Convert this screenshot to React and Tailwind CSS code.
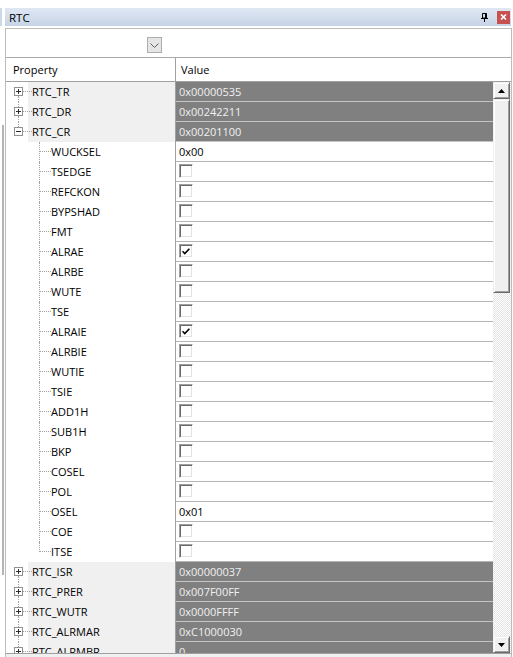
import React from "react";

const rows = [
  { name: "RTC_TR", value: "0x00000535", top: true },
  { name: "RTC_DR", value: "0x00242211", top: true },
  { name: "RTC_CR", value: "0x00201100", top: true, open: true },
  { name: "WUCKSEL", value: "0x00" },
  { name: "TSEDGE", check: false },
  { name: "REFCKON", check: false },
  { name: "BYPSHAD", check: false },
  { name: "FMT", check: false },
  { name: "ALRAE", check: true },
  { name: "ALRBE", check: false },
  { name: "WUTE", check: false },
  { name: "TSE", check: false },
  { name: "ALRAIE", check: true },
  { name: "ALRBIE", check: false },
  { name: "WUTIE", check: false },
  { name: "TSIE", check: false },
  { name: "ADD1H", check: false },
  { name: "SUB1H", check: false },
  { name: "BKP", check: false },
  { name: "COSEL", check: false },
  { name: "POL", check: false },
  { name: "OSEL", value: "0x01" },
  { name: "COE", check: false },
  { name: "ITSE", check: false, last: true },
  { name: "RTC_ISR", value: "0x00000037", top: true },
  { name: "RTC_PRER", value: "0x007F00FF", top: true },
  { name: "RTC_WUTR", value: "0x0000FFFF", top: true },
  { name: "RTC_ALRMAR", value: "0xC1000030", top: true },
  { name: "RTC_ALRMBR", value: "0", top: true },
];

function Expander({ open }) {
  return (
    <span className="absolute left-[8px] top-[5px] flex h-[9px] w-[9px] items-center justify-center border border-[#919191] bg-white">
      <svg width="7" height="7" viewBox="0 0 7 7">
        <rect x="1" y="3" width="5" height="1" fill="#2b2b2b" />
        {!open && <rect x="3" y="1" width="1" height="5" fill="#2b2b2b" />}
      </svg>
    </span>
  );
}

function CheckBox({ checked }) {
  return (
    <span className="mt-[2px] ml-[3px] flex h-[14px] w-[14px] items-center justify-center border border-t-[#a0a0a0] border-l-[#a0a0a0] border-r-[#ffffff] border-b-[#ffffff] bg-white shadow-[inset_1px_1px_0_#696969,inset_-1px_-1px_0_#e3e3e3]">
      {checked && (
        <svg width="8" height="7" viewBox="0 0 8 7">
          <path d="M0.5 3.2 L2.8 5.6 L7.4 0.8" fill="none" stroke="#000" strokeWidth="1.6" />
        </svg>
      )}
    </span>
  );
}

function Row({ row, prevTop, nextTop }) {
  return (
    <div className="flex h-[20px] shrink-0">
      {row.top ? (
        <div className="relative h-full w-[169px] shrink-0">
          {prevTop && (
            <span className="absolute left-[12px] top-0 h-[5px] border-l border-dotted border-[#a0a0a0]" />
          )}
          {nextTop && (
            <span className="absolute left-[12px] top-[14px] h-[6px] border-l border-dotted border-[#a0a0a0]" />
          )}
          <Expander open={row.open} />
          <span className="absolute left-[17px] top-[9px] w-[9px] border-t border-dotted border-[#a0a0a0]" />
          <div className="ml-[22px] flex h-full items-center bg-[#f0f0f0] pb-[1px] pl-[4px]">
            <span className="relative">{row.name}</span>
          </div>
        </div>
      ) : (
        <div className="relative flex h-full w-[169px] shrink-0 items-center pb-[1px] pl-[45px]">
          <span
            className={`absolute left-[33px] top-0 border-l border-dotted border-[#a0a0a0] ${
              row.last ? "h-[10px]" : "h-[20px]"
            }`}
          />
          <span className="absolute left-[34px] top-[9px] w-[11px] border-t border-dotted border-[#a0a0a0]" />
          <span>{row.name}</span>
        </div>
      )}
      <div className="w-px shrink-0 bg-[#a0a0a0]" />
      {row.top ? (
        <div className="flex flex-1 items-center border-b border-[#c4c4c4] bg-[#808080] pl-[3px] text-[#f0f0f0]">
          {row.value}
        </div>
      ) : row.value !== undefined ? (
        <div className="flex flex-1 items-center border-b border-[#b4b4b4] bg-white pl-[3px]">
          {row.value}
        </div>
      ) : (
        <div className="flex flex-1 items-start border-b border-[#b4b4b4] bg-white">
          <CheckBox checked={row.check} />
        </div>
      )}
    </div>
  );
}

function ScrollButton({ dir }) {
  return (
    <div className="flex h-[17px] w-[17px] shrink-0 items-center justify-center border border-t-[#f0f0f0] border-l-[#f0f0f0] border-r-[#696969] border-b-[#696969] bg-[#f0f0f0] shadow-[inset_1px_1px_0_#ffffff,inset_-1px_-1px_0_#a0a0a0]">
      <svg width="7" height="4" viewBox="0 0 7 4">
        {dir === "up" ? (
          <path d="M3.5 0 L7 4 L0 4 Z" fill="#000" />
        ) : (
          <path d="M0 0 L7 0 L3.5 4 Z" fill="#000" />
        )}
      </svg>
    </div>
  );
}

export default function App() {
  return (
    <div className="flex h-[657px] w-[513px] overflow-hidden bg-white font-['Open_Sans',Arial,sans-serif] text-[11px] leading-none text-black">
      {/* edge of the neighbouring window */}
      <div className="flex w-[5px] shrink-0 flex-col">
        <div className="h-[8px] shrink-0" />
        <div className="h-[18px] w-[2px] shrink-0 bg-[#cbd8ea]" />
        <div className="h-[99px] shrink-0" />
        <div className="ml-[2px] h-[450px] w-[2px] shrink-0 bg-[#b4b4b4]" />
      </div>

      <div className="flex w-[507px] shrink-0 flex-col">
        <div className="h-[8px] shrink-0" />
        {/* title bar */}
        <div className="flex h-[18px] w-[506px] shrink-0 items-center bg-linear-to-b from-[#dfe7f3] to-[#c6d4e7] pl-[4px] pr-[1px]">
          <span className="pt-[1px] text-[11.5px]">RTC</span>
          <svg className="ml-auto mr-[9px]" width="7" height="9" viewBox="0 0 7 9">
            <path d="M1.5 0.5 H5.5 V5 H1.5 Z" fill="none" stroke="#000" />
            <rect x="4" y="0.5" width="1.5" height="4.5" fill="#000" />
            <rect x="0" y="5" width="7" height="1" fill="#000" />
            <rect x="3" y="6" width="1" height="3" fill="#000" />
          </svg>
          <div className="flex h-[13px] w-[13px] items-center justify-center bg-[#c75050]">
            <svg width="7" height="6" viewBox="0 0 7 6">
              <path d="M1 0.5 L6 5.5 M6 0.5 L1 5.5" stroke="#fff" strokeWidth="1.6" />
            </svg>
          </div>
        </div>
        <div className="h-[2px] shrink-0" />

        {/* property panel */}
        <div className="flex min-h-0 flex-1 flex-col border-x border-t border-[#bcbcbc]">
          <div className="h-[29px] shrink-0 border-b border-[#a9a9a9] pl-[141px] pt-[8px]">
            <div className="flex h-[16px] w-[15px] items-center justify-center border border-[#adadad] bg-[#e5e5e5]">
              <svg width="9" height="5" viewBox="0 0 9 5">
                <path d="M0.5 0.5 L4.5 4.5 L8.5 0.5" fill="none" stroke="#606060" />
              </svg>
            </div>
          </div>

          <div className="flex h-[24px] shrink-0 border-b border-[#a0a0a0]">
            <div className="flex w-[169px] shrink-0 items-center pl-[7px]">Property</div>
            <div className="w-px shrink-0 bg-[#a0a0a0]" />
            <div className="flex flex-1 items-center pl-[5px]">Value</div>
          </div>

          <div className="flex min-h-0 flex-1">
            <div className="flex min-w-0 flex-1 flex-col overflow-hidden">
              {rows.map((row, i) => (
                <Row
                  key={row.name}
                  row={row}
                  prevTop={row.top && i > 0 && rows[i - 1].top}
                  nextTop={row.top && i < rows.length - 1 && rows[i + 1].top}
                />
              ))}
            </div>
            {/* vertical scrollbar */}
            <div className="flex w-[18px] shrink-0 flex-col bg-[image:repeating-conic-gradient(#ffffff_0%_25%,#e4e4e4_0%_50%)] bg-[length:2px_2px] pr-[1px]">
              <ScrollButton dir="up" />
              <div className="h-[194px] w-[17px] shrink-0 border border-t-[#f0f0f0] border-l-[#f0f0f0] border-r-[#696969] border-b-[#696969] bg-[#f0f0f0] shadow-[inset_1px_1px_0_#ffffff,inset_-1px_-1px_0_#a0a0a0]" />
              <div className="flex-1" />
              <ScrollButton dir="down" />
            </div>
          </div>

          <div className="h-[4px] shrink-0 border-t border-[#a0a0a0] bg-[#f0f0f0]" />
        </div>
      </div>
    </div>
  );
}
